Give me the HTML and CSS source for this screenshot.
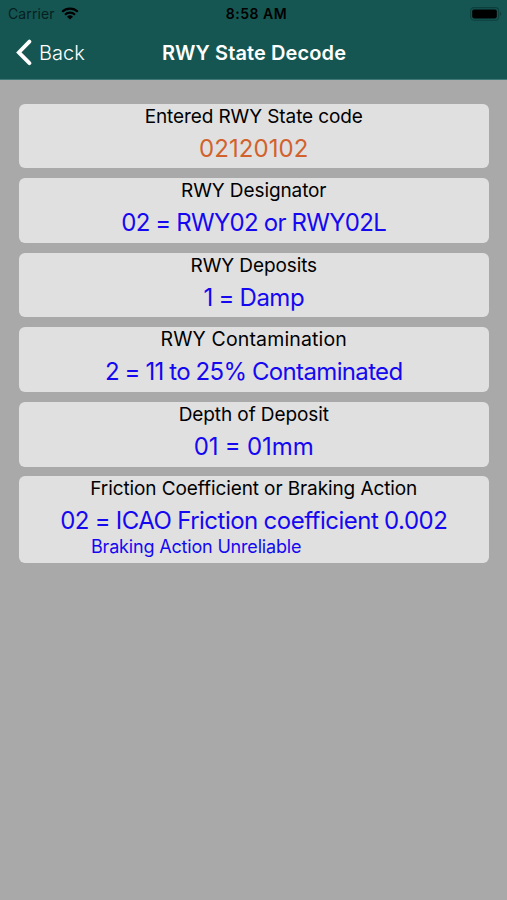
FILE: index.html
```html
<!DOCTYPE html>
<html lang="en">
<head>
  <meta charset="utf-8">
  <title>RWY State Decode</title>
  <link rel="stylesheet" href="styles.css">
</head>
<body>
  <header class="header">
    <div class="status-bar">
      <div class="carrier">
        <span>Carrier</span>
        <svg class="wifi" width="18" height="13" viewBox="0 0 18 13">
          <path d="M1.2 4.7a11.2 11.2 0 0 1 15.6 0M4 7.7a7.2 7.2 0 0 1 10 0" fill="none" stroke="#000" stroke-width="2.2"/>
          <path d="M9 12.6L6 9.7a4.3 4.3 0 0 1 6 0z"/>
        </svg>
      </div>
      <div class="time">8:58 AM</div>
      <div class="battery">
        <svg width="32" height="14" viewBox="0 0 32 14">
          <rect x="0.6" y="0.6" width="28" height="12.6" rx="3.4" fill="none" stroke="#0d3f3c" stroke-width="1.1"/>
          <rect x="2.2" y="2.4" width="24.6" height="9" rx="1.8"/>
          <path d="M30 4.8c1.8.8 1.8 3.4 0 4.2z" fill="#0d3f3c"/>
        </svg>
      </div>
    </div>
    <div class="nav-bar">
      <a class="back" href="#">
        <svg width="17" height="27" viewBox="0 0 17 27">
          <path d="M14.4 2.6L3.8 13.4l10.6 10.8" fill="none" stroke="#fff" stroke-width="3.8" stroke-linecap="round"/>
        </svg>
        <span>Back</span>
      </a>
      <h1>RWY State Decode</h1>
    </div>
  </header>

  <main class="results">
    <div class="card">
      <div class="label">Entered RWY State code</div>
      <div class="value code">02120102</div>
    </div>
    <div class="card designator">
      <div class="label">RWY Designator</div>
      <div class="value">02 = RWY02 or RWY02L</div>
    </div>
    <div class="card deposits">
      <div class="label">RWY Deposits</div>
      <div class="value">1 = Damp</div>
    </div>
    <div class="card contamination">
      <div class="label">RWY Contamination</div>
      <div class="value">2 = 11 to 25% Contaminated</div>
    </div>
    <div class="card">
      <div class="label">Depth of Deposit</div>
      <div class="value">01 = 01mm</div>
    </div>
    <div class="card friction">
      <div class="label">Friction Coefficient or Braking Action</div>
      <div class="value">02 = ICAO Friction coefficient 0.002</div>
      <div class="note">Braking Action Unreliable</div>
    </div>
  </main>
</body>
</html>
```

FILE: styles.css
```css
* {
  box-sizing: border-box;
}

body {
  margin: 0;
  min-height: 100vh;
  background-color: #a9a9a9;
  font-family: Inter, "Liberation Sans", sans-serif;
  color: #000;
}

.header {
  height: 79.5px;
  background-color: #155652;
  border-bottom: 1px solid #3f7775;
}

.status-bar {
  display: grid;
  grid-template-columns: 1fr auto 1fr;
  align-items: center;
  height: 27px;
  padding: 0 5px 0 8px;
  font-size: 14px;
}

.carrier {
  display: flex;
  align-items: center;
  gap: 6px;
  letter-spacing: 0.1px;
  color: #06201f;
}

.time {
  margin-left: 3px;
  font-weight: 600;
  letter-spacing: 0.5px;
}

.battery {
  display: flex;
  justify-content: flex-end;
}

.nav-bar {
  display: grid;
  grid-template-columns: 1fr auto 1fr;
  align-items: center;
  height: 51px;
  padding: 0 14px 0 15px;
  color: #fff;
}

.back {
  display: flex;
  align-items: center;
  gap: 7px;
  color: #fff;
  font-size: 20px;
  font-weight: 300;
  text-decoration: none;
}

h1 {
  margin: 0;
  font-size: 20px;
  font-weight: 600;
  letter-spacing: 0.1px;
}

.results {
  display: flex;
  flex-direction: column;
  gap: 9.9px;
  padding: 24px 18.5px 0 19px;
}

.card {
  height: 64.7px;
  border-radius: 6px;
  background-color: #e0e0e0;
  text-align: center;
  white-space: nowrap;
}

.label {
  font-size: 19px;
  line-height: 25px;
  letter-spacing: -0.1px;
}

.value {
  font-size: 24px;
  line-height: 40px;
  word-spacing: -0.5px;
  color: #1508f0;
}

.code {
  letter-spacing: 0.1px;
  color: #d2622d;
}

.designator .value,
.contamination .value {
  letter-spacing: -0.65px;
}

.deposits .value {
  letter-spacing: -0.5px;
}

.contamination .label {
  font-size: 19.5px;
  letter-spacing: 0.15px;
}

.friction {
  height: 87px;
}

.friction .value {
  letter-spacing: -0.5px;
}

.note {
  margin-top: -4.5px;
  padding-left: 72px;
  font-size: 18px;
  line-height: 20px;
  letter-spacing: -0.18px;
  text-align: left;
  color: #1508f0;
}
```
